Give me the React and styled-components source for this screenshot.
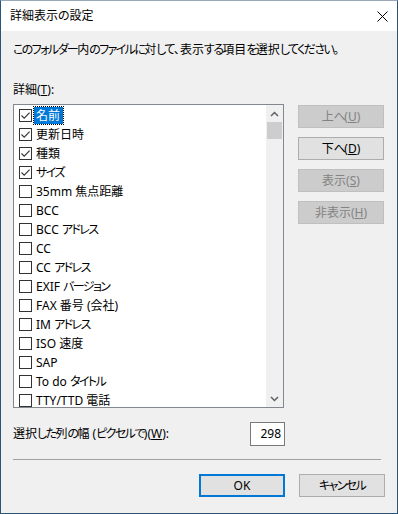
import React from 'react';
import styled, { createGlobalStyle } from 'styled-components';

const Global = createGlobalStyle`
    html, body { margin: 0; padding: 0; background: #f0f0f0; }
    body {
        font-family: "Noto Sans", "Noto Sans CJK JP", sans-serif;
        font-size: 12px;
        font-feature-settings: "palt";
        color: #000;
    }
    u { text-underline-offset: 1px; }
`;

const items = [
    { label: '名前', checked: true, selected: true },
    { label: '更新日時', checked: true },
    { label: '種類', checked: true },
    { label: 'サイズ', checked: true },
    { label: '35mm 焦点距離' },
    { label: 'BCC' },
    { label: 'BCC アドレス' },
    { label: 'CC' },
    { label: 'CC アドレス' },
    { label: 'EXIF バージョン' },
    { label: 'FAX 番号 (会社)' },
    { label: 'IM アドレス' },
    { label: 'ISO 速度' },
    { label: 'SAP' },
    { label: 'To do タイトル' },
    { label: 'TTY/TTD 電話' },
];

// kana in the UI font are much narrower than in Noto CJK, so squeeze those runs
function Jp({ children }) {
    const parts = String(children).split(/([\u3040-\u30ff]+)/);
    return parts.map((p, i) => (i % 2 ? <Kana key={i}>{p}</Kana> : p));
}

function CheckBox({ checked }) {
    return (
        <Box>
            {checked && (
                <svg width="11" height="11" viewBox="0 0 11 11">
                    <path d="M1.5 5.5 L4.2 8.2 L9.6 2.6" fill="none" stroke="#333" strokeWidth="1.1" />
                </svg>
            )}
        </Box>
    );
}

function Arrow({ down }) {
    return (
        <svg width="9" height="6" viewBox="0 0 9 6">
            <path d={down ? 'M1 1 L4.5 4.5 L8 1' : 'M1 5 L4.5 1.5 L8 5'} fill="none" stroke="#606060" strokeWidth="1.5" />
        </svg>
    );
}

export default function App() {
    return (
        <>
            <Global />
            <Window>
                <TitleBar>
                    <Title>詳細表示の設定</Title>
                    <Close>
                        <svg width="11" height="11" viewBox="0 0 11 11">
                            <path d="M0.5 0.5 L10.5 10.5 M10.5 0.5 L0.5 10.5" stroke="#000" strokeWidth="1" />
                        </svg>
                    </Close>
                </TitleBar>
                <Body>
                    <Desc><Jp>このフォルダー内のファイルに対して、表示する項目を選択してください。</Jp></Desc>
                    <FieldLabel>詳細(<u>T</u>):</FieldLabel>
                    <Main>
                        <List>
                            <Rows>
                                {items.map(it => (
                                    <Row key={it.label}>
                                        <CheckBox checked={it.checked} />
                                        <Label $selected={it.selected}><Jp>{it.label}</Jp></Label>
                                    </Row>
                                ))}
                            </Rows>
                            <ScrollBar>
                                <ArrowBtn><Arrow /></ArrowBtn>
                                <Thumb />
                                <Track />
                                <ArrowBtn><Arrow down /></ArrowBtn>
                            </ScrollBar>
                        </List>
                        <Side>
                            <Button $disabled>上<Kana>へ</Kana>(<u>U</u>)</Button>
                            <Button>下<Kana>へ</Kana>(<u>D</u>)</Button>
                            <Button $disabled>表示(<u>S</u>)</Button>
                            <Button $disabled>非表示(<u>H</u>)</Button>
                        </Side>
                    </Main>
                    <WidthRow>
                        <span>選択<Kana>した</Kana>列<Kana>の</Kana>幅 (<Kana>ピクセルで</Kana>)(<u>W</u>):</span>
                        <NumBox>298</NumBox>
                    </WidthRow>
                    <Separator />
                    <Footer>
                        <Button $default>OK</Button>
                        <Button><Kana>キャンセル</Kana></Button>
                    </Footer>
                </Body>
            </Window>
        </>
    );
}

const Kana = styled.span`
    letter-spacing: -1.6px;
`;

const Window = styled.div`
    box-sizing: border-box;
    width: 398px;
    height: 514px;
    border: 1px solid #2a5478;
    border-top-color: #9aa9b8;
    background: #f0f0f0;
    display: flex;
    flex-direction: column;
`;

const TitleBar = styled.div`
    height: 30px;
    background: #fff;
    display: flex;
    align-items: center;
    justify-content: space-between;
    padding: 0 9px;
`;

const Title = styled.div`
    font-size: 12px;
    line-height: 16px;
`;

const Close = styled.div`
    width: 11px;
    height: 11px;
    display: flex;
`;

const Body = styled.div`
    padding: 0 12px;
    display: flex;
    flex-direction: column;
`;

const Desc = styled.div`
    line-height: 16px;
    margin-top: 11px;
    white-space: nowrap;
`;

const FieldLabel = styled.div`
    line-height: 16px;
    margin-top: 24px;
`;

const Main = styled.div`
    display: flex;
    margin-top: 6px;
    gap: 14px;
`;

const List = styled.div`
    box-sizing: border-box;
    width: 271px;
    height: 304px;
    border: 1px solid #828790;
    background: #fff;
    display: flex;
    overflow: hidden;
`;

const Rows = styled.div`
    flex: 1;
    padding-top: 1px;
`;

const Row = styled.div`
    height: 19px;
    display: flex;
    align-items: center;
    padding-left: 5px;
`;

const Box = styled.div`
    box-sizing: border-box;
    width: 13px;
    height: 13px;
    border: 1px solid #333;
    background: #fff;
    display: flex;
    flex-shrink: 0;
`;

const Label = styled.span`
    margin-left: 2px;
    padding: 0 3px 0 2px;
    height: 17px;
    line-height: 17px;
    white-space: nowrap;
    background: ${p => (p.$selected ? '#0078d7' : 'transparent')};
    color: ${p => (p.$selected ? '#fff' : '#000')};
    outline: ${p => (p.$selected ? '1px dotted #000' : 'none')};
`;

const ScrollBar = styled.div`
    width: 17px;
    background: #f0f0f0;
    display: flex;
    flex-direction: column;
`;

const ArrowBtn = styled.div`
    height: 17px;
    display: flex;
    align-items: center;
    justify-content: center;
`;

const Thumb = styled.div`
    height: 17px;
    margin: 0 1px;
    background: #cdcdcd;
`;

const Track = styled.div`
    flex: 1;
`;

const Side = styled.div`
    display: flex;
    flex-direction: column;
    gap: 9px;
    padding-top: 1px;
`;

const Button = styled.div`
    box-sizing: border-box;
    width: 86px;
    height: 23px;
    display: flex;
    align-items: center;
    justify-content: center;
    line-height: 16px;
    background: ${p => (p.$disabled ? '#cccccc' : '#e1e1e1')};
    border: ${p => (p.$default ? '2px solid #0078d7' : p.$disabled ? '1px solid #bfbfbf' : '1px solid #adadad')};
    color: ${p => (p.$disabled ? '#838383' : '#000')};
`;

const WidthRow = styled.div`
    display: flex;
    align-items: center;
    justify-content: space-between;
    width: 272px;
    margin-top: 14px;
    line-height: 16px;
`;

const NumBox = styled.div`
    box-sizing: border-box;
    width: 35px;
    height: 24px;
    border: 1px solid #7a7a7a;
    background: #fff;
    display: flex;
    align-items: center;
    justify-content: flex-end;
    padding-right: 3px;
`;

const Separator = styled.div`
    height: 1px;
    width: 368px;
    background: #a0a0a0;
    margin-top: 13px;
`;

const Footer = styled.div`
    display: flex;
    justify-content: flex-end;
    gap: 14px;
    margin-top: 14px;
`;
